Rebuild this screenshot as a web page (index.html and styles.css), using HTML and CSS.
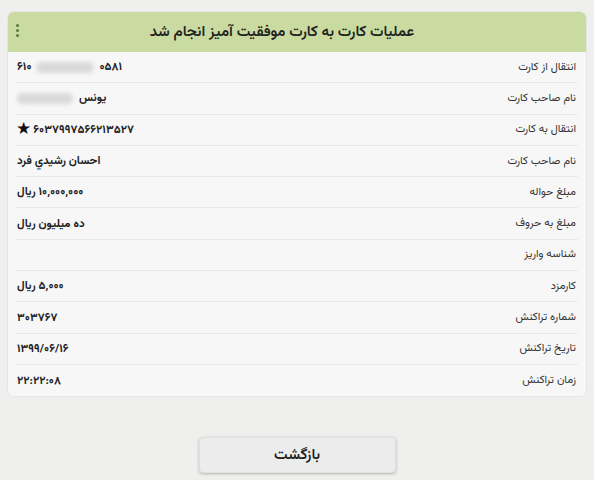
FILE: index.html
```html
<!DOCTYPE html>
<html lang="fa" dir="rtl">
<head>
<meta charset="utf-8">
<link rel="stylesheet" href="styles.css">
</head>
<body>
<div class="page">
  <div class="card">
    <div class="card-head">
      <span class="title">عملیات کارت به کارت موفقیت آمیز انجام شد</span>
      <span class="menu"><i></i><i></i><i></i></span>
    </div>
    <div class="rows">
      <div class="row"><span class="label">انتقال از کارت</span><span class="value ltr">۶۱۰<span class="blur wide"></span>۰۵۸۱</span></div>
      <div class="row"><span class="label">نام صاحب کارت</span><span class="value">یونس <span class="blur name"></span></span></div>
      <div class="row"><span class="label">انتقال به کارت</span><span class="value">۶۰۳۷۹۹۷۵۶۶۲۱۳۵۲۷ <span class="star">★</span></span></div>
      <div class="row"><span class="label">نام صاحب کارت</span><span class="value">احسان رشيدي فرد</span></div>
      <div class="row"><span class="label">مبلغ حواله</span><span class="value">۱۰,۰۰۰,۰۰۰ ریال</span></div>
      <div class="row"><span class="label">مبلغ به حروف</span><span class="value">ده میلیون ریال</span></div>
      <div class="row"><span class="label">شناسه واریز</span><span class="value"></span></div>
      <div class="row"><span class="label">کارمزد</span><span class="value">۵,۰۰۰ ریال</span></div>
      <div class="row"><span class="label">شماره تراکنش</span><span class="value">۳۰۳۷۶۷</span></div>
      <div class="row"><span class="label">تاریخ تراکنش</span><span class="value ltr">۱۳۹۹/۰۶/۱۶</span></div>
      <div class="row"><span class="label">زمان تراکنش</span><span class="value ltr">۲۲:۲۲:۰۸</span></div>
    </div>
  </div>
  <div class="actions">
    <button class="btn">بازگشت</button>
  </div>
</div>
</body>
</html>
```

FILE: styles.css
```css
* { box-sizing: border-box; }
html, body { margin: 0; padding: 0; }
body {
  width: 594px;
  height: 480px;
  background: #efefee;
  font-family: "Vazirmatn", "Noto Sans Arabic", "DejaVu Sans", sans-serif;
  color: #222;
  overflow: hidden;
}
.page {
  padding: 11px 7px 0 7px;
  display: flex;
  flex-direction: column;
}
.card {
  background: #f7f7f7;
  border: 1px solid #e6e6e6;
  border-radius: 7px;
  overflow: hidden;
}
.card-head {
  height: 40px;
  background: #c9dba0;
  display: flex;
  align-items: center;
  justify-content: center;
  padding-right: 30px;
  position: relative;
}
.title {
  font-size: 15px;
  font-weight: 600;
  color: #222;
}
.menu {
  position: absolute;
  left: 8px;
  top: 12px;
  display: flex;
  flex-direction: column;
  gap: 2px;
}
.menu i {
  width: 3px;
  height: 3px;
  border-radius: 50%;
  background: #5e7a3e;
}
.rows {
  padding: 0 8px;
}
.row {
  height: 31.3px;
  display: flex;
  align-items: center;
  justify-content: space-between;
  padding: 0 2px 0 0;
  border-bottom: 1px solid #e9e9e9;
}
.row:last-child { border-bottom: none; }
.label {
  font-size: 11px;
  color: #333;
}
.value {
  font-size: 11.5px;
  font-weight: bold;
  color: #222;
  display: flex;
  align-items: center;
  gap: 2px;
  padding-left: 1px;
}
.ltr { direction: ltr; }
.blur {
  display: inline-block;
  height: 11px;
  background: #d9d9d9;
  border-radius: 6px;
  filter: blur(2px);
}
.blur.wide { width: 58px; margin: 0 3px; }
.blur.name { width: 56px; margin-right: 4px; }
.star { font-size: 17px; color: #111; font-weight: normal; margin-left: -1px; }
.actions {
  display: flex;
  justify-content: center;
  padding-top: 40px;
}
.btn {
  width: 197px;
  height: 36px;
  background: #ececec;
  border: 1px solid #e0e0e0;
  border-radius: 4px;
  box-shadow: 0 1px 3px rgba(0,0,0,0.25);
  font-family: "Vazirmatn", "Noto Sans Arabic", "DejaVu Sans", sans-serif;
  font-size: 15px;
  font-weight: 600;
  color: #222;
}
```
